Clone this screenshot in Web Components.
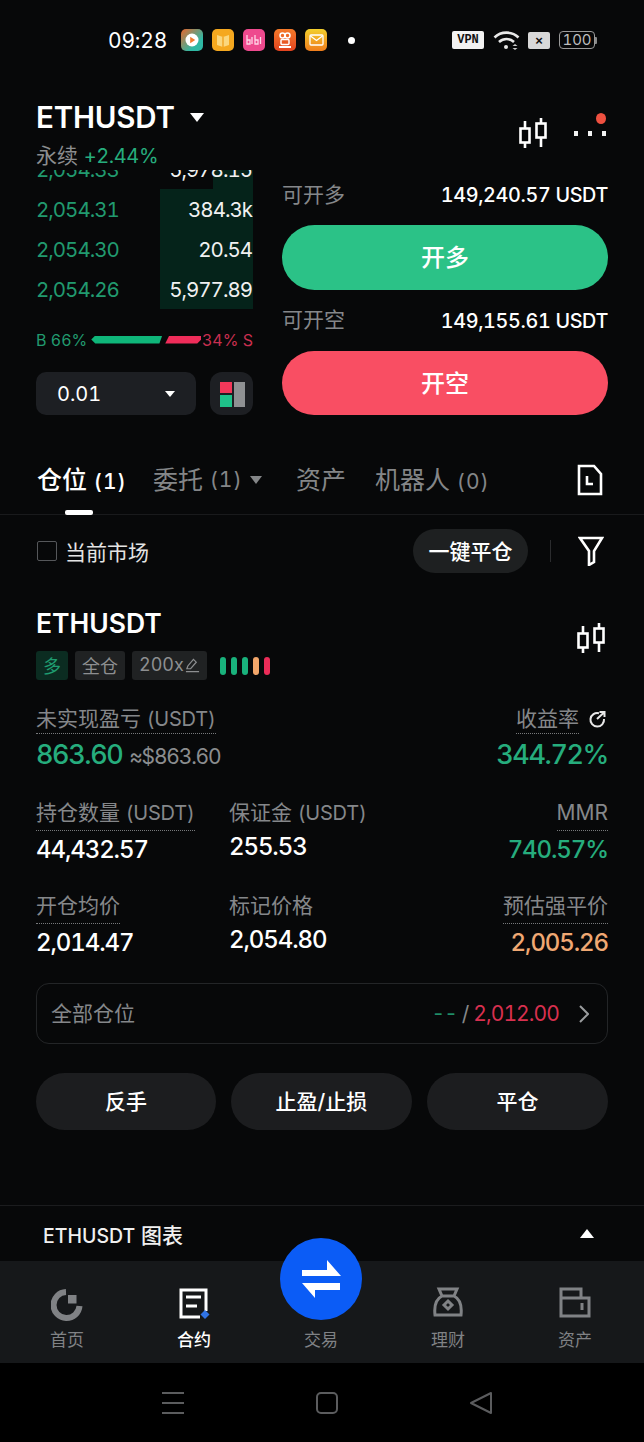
<!DOCTYPE html>
<html lang="zh">
<head>
<meta charset="utf-8">
<title>ETHUSDT</title>
<style>
  html, body { margin: 0; padding: 0; background: #070809; }
  body {
    width: 644px; height: 1442px; overflow: hidden;
    font-family: Inter, "Noto Sans CJK SC", sans-serif;
    font-variant-numeric: tabular-nums;
    color: #fff;
    display: flex; flex-direction: column;
  }
</style>
</head>
<body>
<status-bar></status-bar>
<market-header></market-header>
<trade-panel></trade-panel>
<position-tabs></position-tabs>
<position-card></position-card>
<chart-toggle></chart-toggle>
<bottom-tabs></bottom-tabs>
<nav-bar></nav-bar>

<script>
const CANDLES = `<svg width="28" height="30" viewBox="1 0 28 30" fill="none" stroke="#fff" stroke-width="2.6"><rect x="2.5" y="10.5" width="9" height="14"/><path d="M7 3v7M7 25v5"/><rect x="18.5" y="5.5" width="9" height="14"/><path d="M23 0v5M23 20v9"/></svg>`;

// small base so each element only has to give its styles and markup
class Base extends HTMLElement {
  connectedCallback() {
    if (!this.shadowRoot) this.attachShadow({ mode: "open" });
    this.shadowRoot.innerHTML = `<style>:host{display:block;box-sizing:border-box} *{box-sizing:border-box}${this.styles()}</style>${this.markup()}`;
  }
  styles() { return ""; }
  markup() { return ""; }
}

class StatusBar extends Base {
  styles() { return `
    :host { height: 80px; display: flex; align-items: center; padding-left: 108px; flex: none; }
    .time { font-size: 21px; letter-spacing: -0.2px; width: 73px; color: #fff; }
    .apps { display: flex; gap: 9px; }
    .app { width: 22px; height: 22px; border-radius: 5px; display: grid; place-items: center; }
    .dot { width: 7px; height: 7px; border-radius: 50%; background: #fff; margin-left: 21px; }
    .right { display: flex; align-items: center; margin-left: 97px; }
    .vpn { width: 32px; height: 18px; background: #f2f2f2; color: #111; border-radius: 2px; font: 700 12px/18px "Liberation Mono", monospace; text-align: center; }
    .wifi { margin: 0 8px 0 9px; }
    .x { width: 22px; height: 17px; background: #d8d8d8; border-radius: 2px; color: #111; font: 700 13px/17px "Liberation Sans", sans-serif; text-align: center; }
    .bat { width: 36px; height: 18px; margin-left: 9px; border: 1.5px solid #9a9a9a; border-radius: 4px; color: #bdbdbd; font-size: 15px; line-height: 15px; text-align: center; }
    .nub { width: 2px; height: 7px; background: #8a8a8a; border-radius: 0 1px 1px 0; }
  `; }
  markup() { return `
    <span class="time">09:28</span>
    <div class="apps">
      <span class="app" style="background:linear-gradient(135deg,#e8662c,#2fb8a4 70%)"><svg width="14" height="14" viewBox="0 0 14 14"><circle cx="7" cy="7" r="6.5" fill="#fff"/><path d="M5.2 3.8l5 3.2-5 3.2z" fill="#ef7a2e"/></svg></span>
      <span class="app" style="background:#f5a81f"><svg width="14" height="14" viewBox="0 0 14 14"><path d="M1 2l6 2 6-2v10l-6 2-6-2z" fill="#fbd77e"/><path d="M7 4v10" stroke="#f09a12" stroke-width="1.2"/></svg></span>
      <span class="app" style="background:#ee4a8e"><svg width="18" height="12" viewBox="0 0 18 12" fill="none" stroke="#ffd5e6" stroke-width="1.3"><path d="M2 1v9h3V6H2M7 3v7M10 1v9h3V6h-3M15.5 3v7"/></svg></span>
      <span class="app" style="background:linear-gradient(#f47a2a,#e2431f)"><svg width="14" height="16" viewBox="0 0 14 16" fill="none" stroke="#fff" stroke-width="1.5"><circle cx="4.5" cy="3.5" r="2.5"/><circle cx="9.5" cy="3.5" r="2.5"/><rect x="3" y="7.5" width="8" height="5" rx="1"/><path d="M1 15h12" stroke-width="2"/></svg></span>
      <span class="app" style="background:linear-gradient(#f3cf2d,#ef7d1c)"><svg width="15" height="12" viewBox="0 0 15 12" fill="none" stroke="#fff" stroke-width="1.3"><rect x="1" y="1" width="13" height="10" rx="1"/><path d="M1.5 2l6 4.5 6-4.5"/></svg></span>
    </div>
    <span class="dot"></span>
    <div class="right">
      <span class="vpn">VPN</span>
      <svg class="wifi" width="27" height="22" viewBox="0 0 27 22" fill="none" stroke="#e8e8e8" stroke-width="2.6"><path d="M1.5 8.5C8 2 19 2 25.5 8.5M6 13c4.5-4 10.5-4 15 0"/><circle cx="13" cy="18" r="2" fill="#e8e8e8" stroke="none"/><path d="M22 15l-2.5 2h5zM22 21l-2.5-2h5z" fill="#ccc" stroke="none"/></svg>
      <span class="x">×</span>
      <span class="bat">100</span>
      <span class="nub"></span>
    </div>
  `; }
}

class MarketHeader extends Base {
  styles() { return `
    :host { height: 90px; padding: 20px 36px 0; display: flex; justify-content: space-between; position: relative; flex: none; }
    .sym { display: flex; align-items: center; height: 34px; font-size: 29.5px; font-weight: 600; letter-spacing: -0.2px; }
    .caret { width: 0; height: 0; border: 7px solid transparent; border-top: 9px solid #fff; border-bottom: 0; margin-left: 15px; }
    .sub { margin-top: 8px; font-size: 21px; line-height: 28px; color: #8b8d8f; }
    .sub b { font-weight: 400; font-size: 20px; letter-spacing: -0.4px; color: #26ad7d; }
    .tools { display: flex; align-items: flex-start; padding-top: 18px; }
    .more { display: flex; gap: 10px; margin: 13px 0 0 27px; width: 34px; }
    .more i { width: 4px; height: 5px; background: #f2f2f2; flex: none; }
    .badge { position: absolute; right: 38px; top: 33px; width: 10px; height: 11px; border-radius: 50%; background: #ee5040; }
  `; }
  markup() { return `
    <div>
      <div class="sym">ETHUSDT<span class="caret"></span></div>
      <div class="sub">永续 <b>+2.44%</b></div>
    </div>
    <div class="tools">${CANDLES}<div class="more"><i></i><i></i><i></i></div></div>
    <span class="badge"></span>
  `; }
}

class TradePanel extends Base {
  styles() { return `
    :host { height: 245px; padding: 0 36px; display: grid; grid-template-columns: 217px 326px; column-gap: 29px; flex: none; }
    .left { display: flex; flex-direction: column; }
    .book { height: 139px; overflow: hidden; display: flex; flex-direction: column; justify-content: flex-end; }
    .row { flex: none; height: 40px; display: flex; justify-content: space-between; align-items: center; font-size: 20.5px; letter-spacing: -1px;
      background: linear-gradient(#05231a, #05231a) right / var(--depth) 100% no-repeat; }
    .row span:first-child { color: #219a6f; }
    .row span:last-child { color: #f1f1f1; padding-right: 1px; }
    .ratio { height: 63px; display: flex; align-items: center; font-size: 16px; padding-bottom: 2px; }
    .buy { color: #219a6f; }
    .sell { color: #c92f50; margin-left: auto; }
    .bar { height: 8px; }
    .bar.g { width: 71px; margin-left: 4px; background: #0fb67a; clip-path: polygon(4px 0, 100% 0, 96% 100%, 4px 100%, 0 50%); }
    .bar.r { width: 36px; margin-left: 3px; background: #ef2d5a; clip-path: polygon(4px 0, 100% 0, 100% 50%, 32px 100%, 0 100%); }
    .controls { display: flex; justify-content: space-between; }
    .select { width: 160px; height: 43px; background: #1d1f23; border-radius: 10px; display: flex; align-items: center; padding: 0 21px; font-size: 20px; justify-content: space-between; }
    .tri { width: 0; height: 0; border: 5px solid transparent; border-top: 6px solid #fff; border-bottom: 0; }
    .layout { width: 43px; height: 43px; background: #1d1f23; border-radius: 12px; display: grid; place-items: center; }
    .line { display: flex; justify-content: space-between; align-items: center; font-size: 19.8px; letter-spacing: -0.35px; font-weight: 500; height: 50px; margin-bottom: 5px; }
    .line.two { height: 61px; margin: 0; }
    .line span { color: #85878a; font-size: 21px; font-weight: 400; letter-spacing: 0; margin-top: -4px; }
    .line.two span { margin-top: -5px; }
    .btn { height: 65px; border-radius: 33px; display: grid; place-items: center; font-size: 24px; font-weight: 500; padding-bottom: 4px; }
    .long { background: #2bc287; }
    .short { background: #f94e63; height: 64px; }
  `; }
  markup() { return `
    <div class="left">
      <div class="book">
        <div class="row" style="--depth:40px"><span>2,054.33</span><span>5,978.15</span></div>
        <div class="row" style="--depth:93px"><span>2,054.31</span><span>384.3k</span></div>
        <div class="row" style="--depth:93px"><span>2,054.30</span><span>20.54</span></div>
        <div class="row" style="--depth:93px"><span>2,054.26</span><span>5,977.89</span></div>
      </div>
      <div class="ratio"><span class="buy">B 66%</span><i class="bar g"></i><i class="bar r"></i><span class="sell">34% S</span></div>
      <div class="controls">
        <div class="select">0.01<i class="tri"></i></div>
        <div class="layout"><svg width="26" height="26" viewBox="0 0 26 26"><rect x="1" y="1" width="12" height="11" fill="#f3385a"/><rect x="1" y="14" width="12" height="12" fill="#1fc28a"/><rect x="15" y="1" width="11" height="25" fill="#8f9193"/></svg></div>
      </div>
    </div>
    <div class="right">
      <div class="line"><span>可开多</span>149,240.57 USDT</div>
      <div class="btn long">开多</div>
      <div class="line two"><span>可开空</span>149,155.61 USDT</div>
      <div class="btn short">开空</div>
    </div>
  `; }
}

class PositionTabs extends Base {
  styles() { return `
    :host { flex: none; }
    .tabs { height: 100px; padding: 48px 41px 0 37px; display: flex; align-items: flex-start; border-bottom: 1px solid #191a1c; position: relative; font-size: 25px; line-height: 34px; color: #848688; }
    .tabs small { font-size: 21px; letter-spacing: 1px; }
    .on { color: #fff; font-weight: 500; width: 116px; }
    .t2 { width: 143px; display: flex; align-items: center; }
    .t2 i { width: 0; height: 0; border: 6px solid transparent; border-top: 8px solid #848688; border-bottom: 0; margin-left: 7px; }
    .t3 { width: 79px; }
    .doc { margin-left: auto; margin-top: 1px; }
    .ink { position: absolute; left: 65px; bottom: -1px; width: 28px; height: 5px; border-radius: 2px; background: #fff; }
    .filter { height: 73px; padding: 0 40px 2px 37px; display: flex; align-items: center; font-size: 21px; color: #e4e4e4; }
    .check { width: 20px; height: 20px; border: 1.5px solid #55575a; border-radius: 2px; margin-right: 8px; }
    .pill { margin-left: auto; width: 115px; height: 44px; border-radius: 22px; background: #1e2021; display: grid; place-items: center; color: #fff; font-weight: 500; padding-bottom: 2px; }
    .sep { width: 1px; height: 22px; background: #2b2c2e; margin: 0 27px 0 22px; }
  `; }
  markup() { return `
    <div class="tabs">
      <span class="on">仓位 <small>(1)</small></span>
      <span class="t2">委托 <small>&nbsp;(1)</small><i></i></span>
      <span class="t3">资产</span>
      <span>机器人 <small>(0)</small></span>
      <svg class="doc" width="26" height="32" viewBox="0 0 26 32" fill="none" stroke="#fff" stroke-width="2.6"><path d="M2 2h15l7 8v20H2z"/><path d="M10 12v8h6"/></svg>
      <span class="ink"></span>
    </div>
    <div class="filter">
      <span class="check"></span>当前市场
      <span class="pill">一键平仓</span>
      <span class="sep"></span>
      <svg width="26" height="30" viewBox="0 0 26 30" fill="none" stroke="#fff" stroke-width="2.6"><path d="M2 2h22l-8 13v11l-5 3V15z"/></svg>
    </div>
  `; }
}

// label over value, with the dotted underline on the labels that have a tooltip
class PositionMetric extends Base {
  styles() { return `
    :host { display: flex; flex-direction: column; align-items: flex-start; }
    :host([align=end]) { align-items: flex-end; }
    .label { font-size: 21px; line-height: 30px; height: 33px; color: #85878a; white-space: nowrap; }
    .label small { font-size: 20px; letter-spacing: -0.2px; }
    :host([dotted]) .label { border-bottom: 1.5px dotted #77797b; }
    .value { font-size: 24px; font-weight: 500; line-height: 30px; margin-top: 1px; letter-spacing: -1.1px; color: var(--tone, #fff); }
    :host([dotted]) .value { margin-top: 4px; }
  `; }
  markup() {
    return `<span class="label">${this.getAttribute("label")}</span><span class="value"><slot></slot></span>`;
  }
}

class PositionCard extends Base {
  styles() { return `
    :host { flex: none; padding: 0 36px; display: block; }
    .head { display: flex; justify-content: space-between; align-items: flex-start; padding-top: 19px; height: 63px; }
    .sym { font-size: 26.5px; font-weight: 600; line-height: 32px; }
    .head svg { margin: 16px 3px 0 0; }
    .tags { display: flex; align-items: center; gap: 7px; height: 29px; }
    .tag { height: 29px; padding: 0 7px 2px; border-radius: 3px; background: #202223; color: #8d8f91; font-size: 18px; display: flex; align-items: center; gap: 1px; }
    .tag svg { width: 15px; }
    .tag.g { background: #0b2c21; color: #1f9d70; }
    .gauge { display: flex; gap: 5px; margin-left: 6px; }
    .gauge i { width: 6px; height: 18px; border-radius: 3px; background: #19b27c; }
    .pnl { display: flex; justify-content: space-between; margin-top: 26px; }
    .col { display: flex; flex-direction: column; align-items: flex-start; }
    .col.end { align-items: flex-end; }
    .lab { font-size: 21px; line-height: 26px; height: 28px; color: #85878a; border-bottom: 1.5px dotted #77797b; display: block; }
    .lab small { font-size: 20px; letter-spacing: -0.2px; }
    .lab-row { display: flex; gap: 10px; align-items: flex-start; }
    .lab-row svg { margin: 5px 2px 0 0; }
    .big { font-size: 27px; font-weight: 500; color: #26ad7d; line-height: 36px; margin-top: 3px; letter-spacing: -1.4px; }
    .big small { font-size: 21px; font-weight: 400; color: #8b8d8f; margin-left: 1px; letter-spacing: -1.2px; }
    .grid { display: grid; grid-template-columns: 193px 1fr auto; row-gap: 26px; margin-top: 23px; }
    .all { height: 61px; margin-top: 25px; border: 1.5px solid #232527; border-radius: 13px; padding: 0 18px 0 14px; display: flex; align-items: center; font-size: 21px; color: #85878a; }
    .all > span:first-child { margin-top: -4px; }
    .all .sum { margin-left: auto; margin-right: 20px; letter-spacing: -0.9px; }
    .all .g { color: #1f8f68; }
    .all .r { color: #d8304f; }
    .actions { display: grid; grid-template-columns: 180px 181px 181px; justify-content: space-between; margin-top: 29px; }
    .act { height: 57px; border-radius: 29px; background: #1c1d1f; display: grid; place-items: center; font-size: 21px; font-weight: 500; padding-bottom: 4px; }
  `; }
  markup() { return `
    <div class="head"><span class="sym">ETHUSDT</span>${CANDLES}</div>
    <div class="tags">
      <span class="tag g">多</span>
      <span class="tag">全仓</span>
      <span class="tag">200x<svg width="16" height="16" viewBox="0 0 16 16" fill="none" stroke="#8d8f91" stroke-width="1.3"><path d="M2 12l1-3 6-7 3 3-6 7zM1 15h14"/></svg></span>
      <span class="gauge"><i></i><i></i><i></i><i style="background:#f2a66a"></i><i style="background:#ec2c58"></i></span>
    </div>
    <div class="pnl">
      <div class="col">
        <span class="lab">未实现盈亏 <small>(USDT)</small></span>
        <span class="big">863.60 <small>≈$863.60</small></span>
      </div>
      <div class="col end">
        <div class="lab-row"><span class="lab">收益率</span>
          <svg width="17" height="17" viewBox="0 0 17 17" fill="none" stroke="#e8e8e8" stroke-width="2"><path d="M10 2.2A6.8 6.8 0 1 0 15 8"/><path d="M8 8l7-6.5M10.5 1H15.5v5"/></svg></div>
        <span class="big">344.72%</span>
      </div>
    </div>
    <div class="grid">
      <position-metric dotted label="持仓数量 <small>(USDT)</small>">44,432.57</position-metric>
      <position-metric label="保证金 <small>(USDT)</small>">255.53</position-metric>
      <position-metric dotted align="end" label="MMR" style="--tone:#26ad7d">740.57%</position-metric>
      <position-metric dotted label="开仓均价">2,014.47</position-metric>
      <position-metric label="标记价格">2,054.80</position-metric>
      <position-metric dotted align="end" label="预估强平价" style="--tone:#f0a873">2,005.26</position-metric>
    </div>
    <div class="all"><span>全部仓位</span>
      <span class="sum"><span class="g">--</span> / <span class="r">2,012.00</span></span>
      <svg width="10" height="18" viewBox="0 0 10 18" fill="none" stroke="#9a9c9e" stroke-width="2"><path d="M1 1l8 8-8 8"/></svg>
    </div>
    <div class="actions"><span class="act">反手</span><span class="act">止盈/止损</span><span class="act">平仓</span></div>
  `; }
}

class ChartToggle extends Base {
  styles() { return `
    :host { margin-top: 75px; height: 56px; flex: none; border-top: 1px solid #1b1c1e; padding: 0 50px 0 43px; display: flex; align-items: center; justify-content: space-between; font-size: 21px; font-weight: 500; color: #f0f0f0; }
    small { font-size: 19.5px; }
    i { width: 0; height: 0; border: 7px solid transparent; border-bottom: 9px solid #fff; border-top: 0; }
  `; }
  markup() { return `<span><small>ETHUSDT</small> 图表</span><i></i>`; }
}

class BottomTabs extends Base {
  styles() { return `
    :host { height: 102px; flex: none; background: #16181a; display: grid; grid-template-columns: repeat(5, 127px); padding-left: 3.5px; position: relative; }
    .tab { display: flex; flex-direction: column; align-items: center; font-size: 17px; color: #808285; padding-top: 26px; }
    .tab svg { height: 34px; flex: none; }
    .tab span { margin-top: 7px; line-height: 24px; }
    .tab.on { color: #fff; font-weight: 500; }
    .tab.trade { padding-top: 67px; }
    .tab.trade span { margin-top: 0; }
    .fab { position: absolute; left: 280px; top: -23px; width: 82px; height: 82px; border-radius: 50%; background: #0b5cf6; }
  `; }
  markup() { return `
    <div class="tab"><svg width="32" height="34" viewBox="0 0 32 34" fill="none"><path d="M15 5a13 13 0 1 0 13.5 14" stroke="#808285" stroke-width="6"/><rect x="17" y="8" width="8.5" height="8.5" fill="#808285"/></svg><span>首页</span></div>
    <div class="tab on"><svg width="32" height="34" viewBox="0 0 32 34" fill="none"><path d="M28 24V3H3v27h19" stroke="#fff" stroke-width="3"/><path d="M8 10h15M8 19h11" stroke="#fff" stroke-width="3"/><path d="M27 23l4.5 4.5L27 32l-4.5-4.5z" fill="#2f73e6"/></svg><span>合约</span></div>
    <div class="tab trade"><span>交易</span></div>
    <div class="tab"><svg width="32" height="34" viewBox="0 0 32 34" fill="none" stroke="#808285" stroke-width="3"><path d="M7 2h18l-3 7H10zM10 9c-6 3-8 10-7 19h26c1-9-1-16-7-19"/><path d="M16 14l4 4-4 4-4-4z"/></svg><span>理财</span></div>
    <div class="tab"><svg width="32" height="34" viewBox="0 0 32 34" fill="none" stroke="#808285" stroke-width="3"><path d="M2 11V2h20v9M2 11h28v18H2z"/><path d="M23 16v7"/></svg><span>资产</span></div>
    <div class="fab"><svg width="82" height="82" viewBox="0 0 82 82" fill="#fff"><path d="M22 32h25V22l14 16H22zM60 45v7H35v8L22 45z"/></svg></div>
  `; }
}

class NavBar extends Base {
  styles() { return `
    :host { flex: 1; background: #000; display: flex; align-items: center; justify-content: center; gap: 122px; padding-left: 10px; }
  `; }
  markup() { return `
    <svg width="32" height="24" viewBox="0 0 32 24" stroke="#5b5c5e" stroke-width="2"><path d="M5 2h22M5 12h22M5 22h22"/></svg>
    <svg width="32" height="24" viewBox="0 0 32 24" fill="none" stroke="#5b5c5e" stroke-width="2"><rect x="6" y="2" width="20" height="20" rx="4"/></svg>
    <svg width="32" height="24" viewBox="0 0 32 24" fill="none" stroke="#5b5c5e" stroke-width="2" stroke-linejoin="round"><path d="M26 2v20L6 12z"/></svg>
  `; }
}

customElements.define("status-bar", StatusBar);
customElements.define("market-header", MarketHeader);
customElements.define("trade-panel", TradePanel);
customElements.define("position-tabs", PositionTabs);
customElements.define("position-metric", PositionMetric);
customElements.define("position-card", PositionCard);
customElements.define("chart-toggle", ChartToggle);
customElements.define("bottom-tabs", BottomTabs);
customElements.define("nav-bar", NavBar);
</script>
</body>
</html>
